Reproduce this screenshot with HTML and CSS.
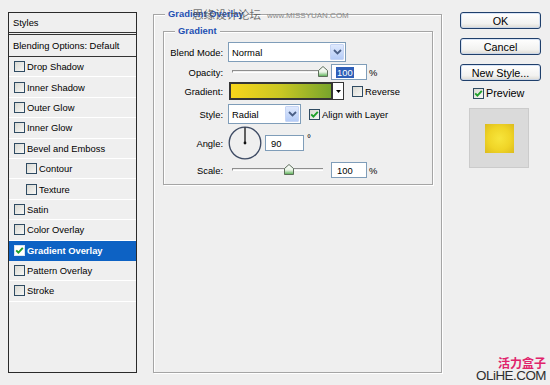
FILE: index.html
```html
<!DOCTYPE html>
<html lang="en">
<head>
    <meta charset="UTF-8">
    <title>Layer Style - Gradient Overlay</title>
    <link rel="stylesheet" href="styles.css">
</head>
<body>
    <div class="dialog">
        <div class="style-list">
            <div class="list-head">Styles</div>
            <div class="list-blend">Blending Options: Default</div>
            <div class="item"><span class="check"></span>Drop Shadow</div>
            <div class="item"><span class="check"></span>Inner Shadow</div>
            <div class="item"><span class="check"></span>Outer Glow</div>
            <div class="item"><span class="check"></span>Inner Glow</div>
            <div class="item"><span class="check"></span>Bevel and Emboss</div>
            <div class="item sub"><span class="check"></span>Contour</div>
            <div class="item sub"><span class="check"></span>Texture</div>
            <div class="item"><span class="check"></span>Satin</div>
            <div class="item"><span class="check"></span>Color Overlay</div>
            <div class="item active">
                <span class="check"><svg width="9" height="9" viewBox="0 0 9 9"><path d="M1.2 4.4 L3.4 6.7 L7.8 1.8" fill="none" stroke="#1fa02a" stroke-width="1.9"/></svg></span>Gradient Overlay
            </div>
            <div class="item"><span class="check"></span>Pattern Overlay</div>
            <div class="item"><span class="check"></span>Stroke</div>
        </div>

        <div class="panel">
            <div class="legend">Gradient Overlay</div>
            <div class="mark">思缘设计论坛<small>www.MISSYUAN.COM</small></div>

            <div class="group">
                <div class="legend">Gradient</div>

                <div class="row row-blend">
                    <label>Blend Mode:</label>
                    <div class="select select-blend">
                        <span class="value">Normal</span>
                        <span class="drop"><svg width="9" height="6" viewBox="0 0 9 6"><path d="M1 1 L4.5 4.5 L8 1" fill="none" stroke="#4a5f86" stroke-width="1.8"/></svg></span>
                    </div>
                </div>

                <div class="row row-opacity">
                    <label>Opacity:</label>
                    <div class="slider">
                        <div class="track"></div>
                        <svg class="thumb" style="left: calc(100% - 5px)" width="10" height="11" viewBox="0 0 10 11"><defs><linearGradient id="tg1" x1="0" y1="0" x2="0" y2="1"><stop offset="0" stop-color="#fff"/><stop offset="0.55" stop-color="#e9f3e6"/><stop offset="1" stop-color="#52ad4e"/></linearGradient></defs><path d="M0.5 4.5 L5 0.5 L9.5 4.5 L9.5 10.5 L0.5 10.5 Z" fill="url(#tg1)" stroke="#5d6e5a"/></svg>
                    </div>
                    <div class="field"><span class="selected">100</span></div>
                    <span class="unit">%</span>
                </div>

                <div class="row row-gradient">
                    <label>Gradient:</label>
                    <div class="swatch"></div>
                    <div class="swatch-drop"><svg width="5" height="3" viewBox="0 0 5 3"><path d="M0 0 H5 L2.5 3 Z" fill="#000"/></svg></div>
                    <span class="check check-reverse"></span>
                    <span>Reverse</span>
                </div>

                <div class="row row-style">
                    <label>Style:</label>
                    <div class="select select-style">
                        <span class="value">Radial</span>
                        <span class="drop"><svg width="9" height="6" viewBox="0 0 9 6"><path d="M1 1 L4.5 4.5 L8 1" fill="none" stroke="#4a5f86" stroke-width="1.8"/></svg></span>
                    </div>
                    <span class="check check-align"><svg width="9" height="9" viewBox="0 0 9 9"><path d="M1.2 4.4 L3.4 6.7 L7.8 1.8" fill="none" stroke="#1fa02a" stroke-width="1.9"/></svg></span>
                    <span>Align with Layer</span>
                </div>

                <div class="row row-angle">
                    <label>Angle:</label>
                    <svg class="dial" width="34" height="34" viewBox="0 0 34 34">
                        <circle cx="17" cy="17" r="15.6" fill="none" stroke="#c9ccd4" stroke-width="1"/>
                        <circle cx="17" cy="17" r="15.8" fill="none" stroke="#3d4a63" stroke-width="1.3"/>
                        <line x1="17" y1="17" x2="17" y2="1.5" stroke="#111" stroke-width="1.3"/>
                        <circle cx="17" cy="17" r="1.4" fill="#111"/>
                    </svg>
                    <div class="field field-angle">90</div>
                    <span class="degree">°</span>
                </div>

                <div class="row row-scale">
                    <label>Scale:</label>
                    <div class="slider">
                        <div class="track"></div>
                        <svg class="thumb" style="left: calc(63% - 5px)" width="10" height="11" viewBox="0 0 10 11"><defs><linearGradient id="tg2" x1="0" y1="0" x2="0" y2="1"><stop offset="0" stop-color="#fff"/><stop offset="0.55" stop-color="#e9f3e6"/><stop offset="1" stop-color="#52ad4e"/></linearGradient></defs><path d="M0.5 4.5 L5 0.5 L9.5 4.5 L9.5 10.5 L0.5 10.5 Z" fill="url(#tg2)" stroke="#5d6e5a"/></svg>
                    </div>
                    <div class="field">100</div>
                    <span class="unit">%</span>
                </div>
            </div>
        </div>

        <div class="actions">
            <div class="btn">OK</div>
            <div class="btn">Cancel</div>
            <div class="btn">New Style...</div>
            <div class="preview-toggle">
                <span class="check check-preview"><svg width="9" height="9" viewBox="0 0 9 9"><path d="M1.2 4.4 L3.4 6.7 L7.8 1.8" fill="none" stroke="#1fa02a" stroke-width="1.9"/></svg></span>
                <span>Preview</span>
            </div>
            <div class="preview-box">
                <div class="preview-swatch"></div>
            </div>
        </div>
    </div>

    <div class="olihe">
        <div class="olihe-cn">活力盒子</div>
        <div class="olihe-en">OLiHE.COM</div>
    </div>
</body>
</html>
```

FILE: styles.css
```css
body {
    margin: 0;
    width: 550px;
    height: 385px;
    position: relative;
    overflow: hidden;
    background: #efefef;
    font-family: "Liberation Sans", Arial, sans-serif;
    font-size: 9.4px;
    color: #000;
}
.dialog {
    display: flex;
    align-items: flex-start;
    padding: 12px 0 0 8px;
}

/* style list */
.style-list {
    width: 129px;
    height: 361px;
    box-sizing: border-box;
    border: 1px solid #2a2a2a;
}
.list-head {
    height: 20px;
    box-sizing: border-box;
    padding-left: 4px;
    line-height: 19px;
    border-bottom: 1px solid #333;
}
.list-blend {
    height: 23px;
    box-sizing: border-box;
    margin-top: 1px;
    padding-left: 4px;
    line-height: 21px;
    border-top: 1px solid #333;
    border-bottom: 1px solid #333;
}
.item {
    display: flex;
    align-items: center;
    height: 20.4px;
    box-sizing: border-box;
    padding-left: 5px;
    border-bottom: 1px solid #fff;
}
.item.sub {
    padding-left: 17px;
}
.item.active {
    background: #0d62c4;
    border-bottom-color: #0d62c4;
    color: #fff;
    font-weight: bold;
}
.check {
    flex: none;
    display: flex;
    align-items: center;
    justify-content: center;
    width: 11px;
    height: 11px;
    box-sizing: border-box;
    margin-right: 2px;
    border: 1px solid #2f4b62;
    background: linear-gradient(135deg, #d9d9d3, #f7f7f5);
}
.item.active .check {
    border-color: #d8e4f2;
    background: #fff;
}

/* main panel */
.panel {
    position: relative;
    width: 289px;
    height: 359px;
    box-sizing: border-box;
    margin: 2px 0 0 16px;
    border: 1px solid #a5a5a5;
    box-shadow: inset 1px 1px 0 #fff, 1px 1px 0 #fff;
}
.legend {
    width: fit-content;
    margin: -7px 0 0 11px;
    padding: 0 3px;
    line-height: 12px;
    background: #efefef;
    color: #1d4fb3;
    font-weight: bold;
}
.mark {
    position: absolute;
    left: 38px;
    top: -9px;
    line-height: 16px;
    font-family: "Noto Sans CJK SC", sans-serif;
    font-size: 11.5px;
    color: rgba(80, 80, 80, 0.8);
    white-space: nowrap;
}
.mark small {
    margin-left: 6px;
    font-family: "Liberation Sans", Arial, sans-serif;
    font-size: 8px;
    color: #8a8a8a;
    vertical-align: 1px;
}
.group {
    margin: 11px 8px 0 9px;
    padding-bottom: 6px;
    border: 1px solid #a5a5a5;
    box-shadow: inset 1px 1px 0 #fff, 1px 1px 0 #fff;
}
.row {
    display: flex;
    align-items: center;
}
.row label {
    flex: none;
    width: 59px;
    margin-right: 5px;
    text-align: right;
}
.row-blend { height: 20px; margin-top: 5px; }
.row-opacity { height: 16px; margin-top: 2px; }
.row-gradient { height: 18px; margin-top: 2px; }
.row-style { height: 20px; margin-top: 4px; }
.row-angle { height: 34px; margin-top: 2px; }
.row-scale { height: 16px; margin-top: 2px; }

.select {
    display: flex;
    align-items: center;
    height: 20px;
    box-sizing: border-box;
    padding-left: 3px;
    border: 1px solid #7f9db9;
    background: #fff;
}
.select .value {
    flex: 1;
}
.select-blend { width: 118px; }
.select-style { width: 73px; }
.drop {
    display: flex;
    align-items: center;
    justify-content: center;
    width: 14px;
    height: 16px;
    box-sizing: border-box;
    margin-right: 1px;
    border: 1px solid #c6d5f5;
    border-radius: 1px;
    background: linear-gradient(#dfe9fd, #b5ccf7);
}

.slider {
    position: relative;
    width: 91px;
    height: 16px;
    margin-left: 4px;
}
.track {
    margin-top: 6px;
    height: 1px;
    border-top: 1px solid #8e8e8e;
    border-bottom: 1px solid #fff;
    border-left: 1px solid #8e8e8e;
}
.thumb {
    position: absolute;
    top: 2px;
}
.field {
    display: flex;
    align-items: center;
    width: 36px;
    height: 16px;
    box-sizing: border-box;
    margin-left: 8px;
    padding-left: 5px;
    border: 1px solid #7f9db9;
    background: #fff;
}
.selected {
    background: #2f5fb8;
    color: #fff;
    padding: 0 1px;
    margin-left: -1px;
    line-height: 11px;
}
.unit {
    margin-left: 2px;
}
.swatch {
    width: 104px;
    height: 18px;
    box-sizing: border-box;
    margin-left: 1px;
    border: 2px solid #353535;
    background: linear-gradient(90deg, #f8d61b, #c9c723 50%, #78a52c);
}
.swatch-drop {
    display: flex;
    align-items: center;
    justify-content: center;
    width: 11px;
    height: 18px;
    box-sizing: border-box;
    border: 1px solid #353535;
    border-left: none;
    background: #fff;
}
.check-reverse {
    margin-left: 8px;
}
.check-align {
    margin-left: 8px;
}
.dial {
    flex: none;
}
.field-angle {
    width: 39px;
    margin-left: 3px;
}
.degree {
    align-self: flex-start;
    margin: 7px 0 0 3px;
    font-size: 10px;
}

/* buttons column */
.actions {
    display: flex;
    flex-direction: column;
    width: 81px;
    margin-left: 18px;
    font-size: 10.8px;
}
.btn {
    display: flex;
    align-items: center;
    justify-content: center;
    height: 17px;
    box-sizing: border-box;
    border: 1px solid #1f3f6b;
    border-radius: 3px;
    background: linear-gradient(#ffffff, #f2f2f0 70%, #dcdad3);
    box-shadow: inset 0 0 0 1px rgba(190, 210, 240, 0.6);
}
.btn + .btn {
    margin-top: 9px;
}
.preview-toggle {
    display: flex;
    align-items: center;
    height: 12px;
    margin: 6px 0 0 13px;
}
.preview-box {
    display: flex;
    align-items: center;
    justify-content: center;
    width: 60px;
    height: 60px;
    box-sizing: border-box;
    margin: 9px 0 0 9px;
    border: 1px solid #cbcbcb;
    background: #dadada;
}
.preview-swatch {
    width: 29px;
    height: 29px;
    background: radial-gradient(circle, #f7e53c 0%, #f0d527 55%, #dcbb1c 100%);
}

/* site mark */
.olihe {
    position: absolute;
    right: 4px;
    bottom: 4px;
    text-align: right;
}
.olihe-cn {
    font-family: "Noto Sans CJK SC", sans-serif;
    font-size: 12px;
    font-weight: bold;
    line-height: 12px;
    margin-bottom: 1px;
    color: #e0236b;
}
.olihe-en {
    font-family: "Liberation Sans", Arial, sans-serif;
    font-size: 13.4px;
    line-height: 11px;
    letter-spacing: -0.5px;
    color: #2e2e2e;
}
```
